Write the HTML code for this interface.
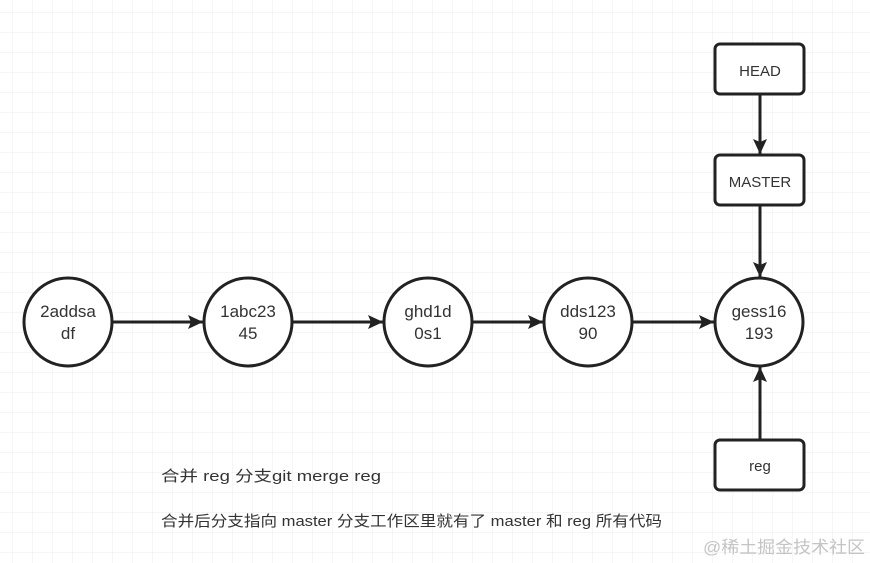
<!DOCTYPE html>
<html><head><meta charset="utf-8"><style>
html,body{margin:0;padding:0;background:#fff;}
svg{display:block;}
text{font-family:"Liberation Sans","Noto Sans CJK SC",sans-serif;fill:#333;}
</style></head><body>
<svg width="870" height="563" viewBox="0 0 870 563" xmlns="http://www.w3.org/2000/svg">
<defs>
<pattern id="g" width="20" height="20" patternUnits="userSpaceOnUse" x="12" y="12">
<path d="M0 0H20M0 0V20" stroke="#ececec" stroke-width="1" fill="none"/>
</pattern>
<marker id="a" markerWidth="16" markerHeight="14" refX="15" refY="7" orient="auto" markerUnits="userSpaceOnUse">
<path d="M0 0L15 7L0 14L3 7Z" fill="#222"/>
</marker>
</defs>
<rect width="870" height="563" fill="#fff"/>
<rect width="870" height="563" fill="url(#g)"/>
<g stroke="#222" stroke-width="3" fill="none">
<line x1="112" y1="322" x2="203" y2="322" marker-end="url(#a)"/>
<line x1="292" y1="322" x2="383" y2="322" marker-end="url(#a)"/>
<line x1="472" y1="322" x2="543" y2="322" marker-end="url(#a)"/>
<line x1="632" y1="322" x2="714" y2="322" marker-end="url(#a)"/>
<line x1="760" y1="95" x2="760" y2="154" marker-end="url(#a)"/>
<line x1="760" y1="206" x2="760" y2="277" marker-end="url(#a)"/>
<line x1="760" y1="439" x2="760" y2="367" marker-end="url(#a)"/>
</g>
<g stroke="#222" stroke-width="3" fill="#fff">
<circle cx="68" cy="322" r="44"/>
<circle cx="248" cy="322" r="44"/>
<circle cx="428" cy="322" r="44"/>
<circle cx="588" cy="322" r="44"/>
<circle cx="759" cy="322" r="44"/>
<rect x="715" y="44" width="89" height="50" rx="5"/>
<rect x="715" y="155" width="89" height="50" rx="5"/>
<rect x="715" y="440" width="89" height="50" rx="5"/>
</g>
<g font-size="17" text-anchor="middle">
<text x="68" y="317">2addsa</text><text x="68" y="339">df</text>
<text x="248" y="317">1abc23</text><text x="248" y="339">45</text>
<text x="428" y="317">ghd1d</text><text x="428" y="339">0s1</text>
<text x="588" y="317">dds123</text><text x="588" y="339">90</text>
<text x="759" y="317">gess16</text><text x="759" y="339">193</text>
</g>
<g font-size="15" text-anchor="middle">
<text x="760" y="76">HEAD</text>
<text x="760" y="187">MASTER</text>
<text x="760" y="471">reg</text>
</g>
<g font-size="15">
<text x="161" y="481" textLength="220" lengthAdjust="spacingAndGlyphs">合并 reg 分支git merge reg</text>
<text x="161" y="526" textLength="501" lengthAdjust="spacingAndGlyphs">合并后分支指向 master 分支工作区里就有了 master 和 reg 所有代码</text>
</g>
<text x="703" y="553" font-size="17" textLength="162" lengthAdjust="spacingAndGlyphs" style="fill:#c4c4c4">@稀土掘金技术社区</text>
</svg>
</body></html>
